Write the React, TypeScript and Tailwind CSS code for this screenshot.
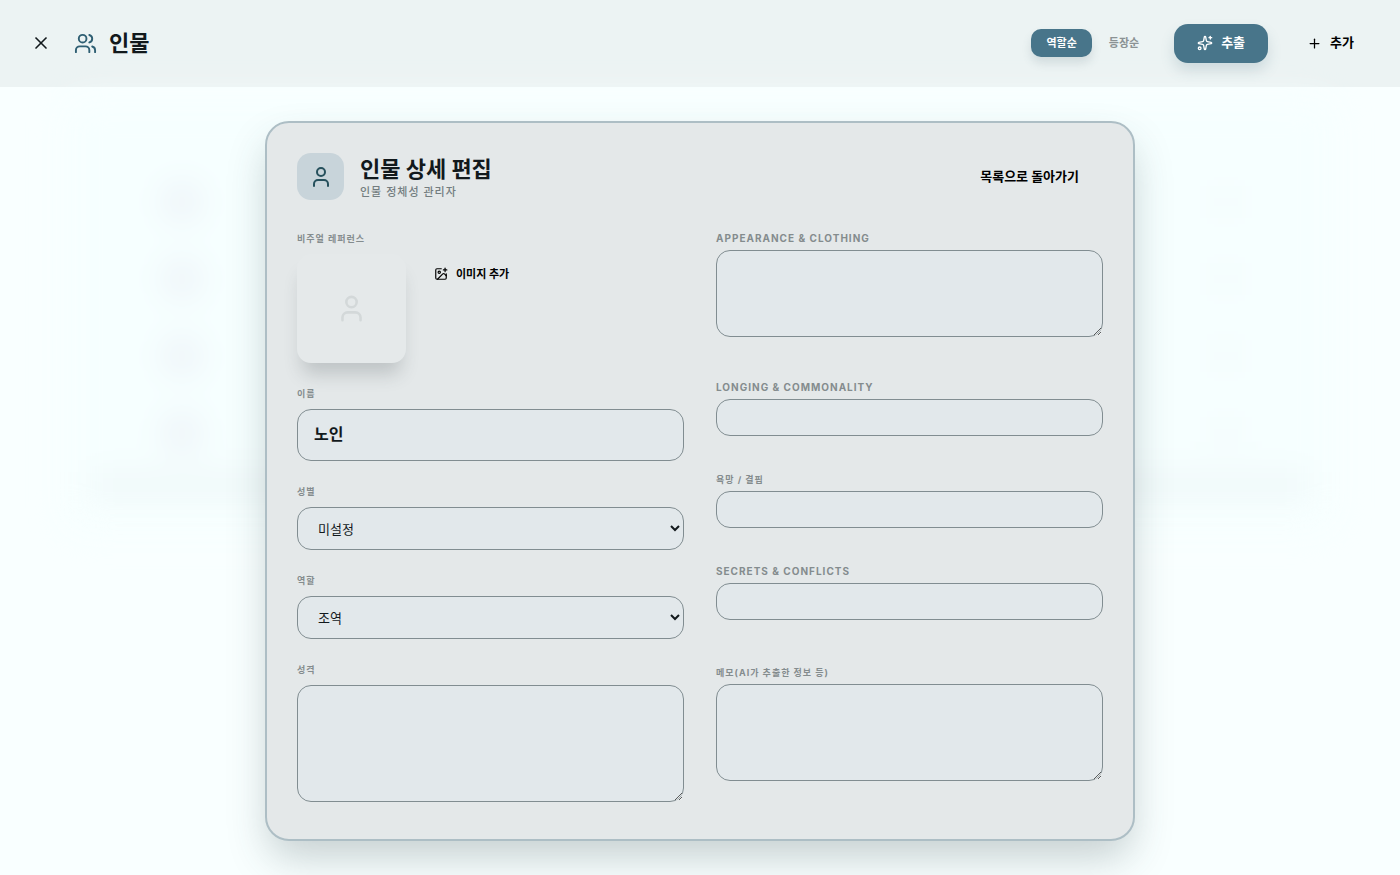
import { useState } from 'react'
import type { ReactNode } from 'react'
import { ImagePlus, Plus, Sparkles, User, Users, X } from 'lucide-react'

interface FieldProps {
    id: string,
    label: string,
    tight?: boolean,
    latin?: boolean,
    children: ReactNode
}

const boxClass = "block w-full rounded-[14px] border border-[#818d91] bg-[#e2e8eb] text-[#12191c] outline-none"

const Field = ({ id, label, tight, latin, children }: FieldProps) => (
    <div>
        <label htmlFor={id} className={`block leading-[15px] font-bold tracking-[1px] text-[#848c8e] ${tight ? 'mb-1' : 'mb-2'} ${latin ? 'text-[10px]' : 'text-[9px]'}`}>{label}</label>
        {children}
    </div>
)

const rows = [1, 2, 3, 4]

// the character list, out of focus behind the dialog
const ListBackdrop = () => (
    <div aria-hidden="true" className="absolute inset-x-0 top-3 px-16 blur-lg">
        <div className="bg-[#f6ffff] rounded-3xl pt-16">
            {rows.map((row) => (
                <div key={row} className="flex justify-between items-center h-[77px] pl-[98px] pr-[98px]">
                    <div className="w-10 h-10 rounded-full bg-[#eef3f8]"></div>
                    <div className="w-6 h-4 bg-[#f2f7fa]"></div>
                </div>
            ))}
            <div className="h-7 mx-7 bg-[#f0f8f9]"></div>
            <div className="h-8"></div>
        </div>
    </div>
)

export const App = () => {
    const [sort, setSort] = useState('role')
    const [name, setName] = useState('노인')

    const tabClass = (active: boolean) =>
        `h-7 px-[15px] rounded-[10px] text-[11px] font-bold ${active ? 'bg-[#48758a] text-white shadow-[0_6px_10px_rgba(72,100,115,0.16)]' : 'text-[#8b9294]'}`

    return (
        <div className="min-h-screen flex flex-col bg-[#f9ffff] overflow-hidden text-[#12191c] font-[Inter,'Noto_Sans_CJK_KR',sans-serif]">
            <header className="h-[87px] shrink-0 flex items-center justify-between pl-[31px] pr-[22px] pb-px bg-[#ecf3f3]">
                <div className="flex items-center">
                    <button type="button" aria-label="닫기" className="mr-[23px]"><X size={20} strokeWidth={2} /></button>
                    <Users size={23} strokeWidth={2} className="text-[#2f5f73]" />
                    <h1 className="ml-3 text-[22px] leading-8 font-bold">인물</h1>
                </div>
                <div className="flex items-center">
                    <div className="flex items-center gap-0.5 mr-5">
                        <button type="button" className={tabClass(sort === 'role')} onClick={() => setSort('role')}>역할순</button>
                        <button type="button" className={tabClass(sort === 'order')} onClick={() => setSort('order')}>등장순</button>
                    </div>
                    <button type="button" className="flex items-center gap-2 h-[39px] px-[23px] mr-[15px] rounded-[14px] bg-[#48758a] text-white text-[13px] font-bold shadow-[0_8px_14px_rgba(72,110,130,0.18)]">
                        <Sparkles size={16} />추출
                    </button>
                    <button type="button" className="flex items-center gap-2 h-[39px] px-6 text-[13px] font-bold text-black">
                        <Plus size={15} />추가
                    </button>
                </div>
            </header>
            <main className="relative grow px-6 pt-[34px] pb-[35px]">
                <ListBackdrop />
                <section className="relative w-full max-w-[870px] mx-auto px-[30px] pt-[30px] pb-[37px] rounded-3xl border-2 border-[#adbec5] bg-[#e4e8e9] shadow-[0_20px_40px_-4px_rgba(50,70,75,0.26)]">
                    <div className="flex items-center justify-between mb-[31px]">
                        <div className="flex items-center gap-4">
                            <div className="w-[47px] h-[47px] rounded-[14px] bg-[#c8d4da] flex items-center justify-center text-[#26505c]">
                                <User size={24} />
                            </div>
                            <div>
                                <h2 className="text-[22px] leading-[30px] font-bold">인물 상세 편집</h2>
                                <p className="text-[11px] leading-4 tracking-[1px] font-medium text-[#737d80]">인물 정체성 관리자</p>
                            </div>
                        </div>
                        <button type="button" className="h-10 px-6 text-[13px] font-bold text-black">목록으로 돌아가기</button>
                    </div>
                    <div className="grid grid-cols-1 md:grid-cols-2 gap-8">
                        <div className="flex flex-col gap-[23px]">
                            <div>
                                <p className="mb-2 text-[9px] leading-[15px] font-bold tracking-[1px] text-[#848c8e]">비주얼 레퍼런스</p>
                                <div className="flex items-start gap-4">
                                    <div className="w-[109px] h-[109px] rounded-[14px] bg-[#e5e9ea] shadow-[0_16px_18px_-5px_rgba(60,70,75,0.22)] flex items-center justify-center text-[#d3d8d9]">
                                        <User size={31} />
                                    </div>
                                    <button type="button" className="flex items-center gap-2 h-10 px-3 text-[11px] font-bold text-black">
                                        <ImagePlus size={14} />이미지 추가
                                    </button>
                                </div>
                            </div>
                            <Field id="name" label="이름">
                                <input id="name" type="text" value={name} onChange={(e) => setName(e.target.value)} className={`${boxClass} h-[52px] px-4 pb-1 text-[16px] font-bold`} />
                            </Field>
                            <Field id="gender" label="성별">
                                <select id="gender" className={`${boxClass} h-[43px] px-4 text-[13px]`}>
                                    <option>미설정</option>
                                    <option>남성</option>
                                    <option>여성</option>
                                </select>
                            </Field>
                            <Field id="role" label="역할">
                                <select id="role" className={`${boxClass} h-[43px] px-4 text-[13px]`}>
                                    <option>조역</option>
                                    <option>주역</option>
                                </select>
                            </Field>
                            <Field id="personality" label="성격">
                                <textarea id="personality" className={`${boxClass} h-[117px] px-4 py-3 text-[13px]`} />
                            </Field>
                        </div>
                        <div className="flex flex-col gap-9">
                            <div className="pb-[7px]">
                                <Field id="appearance" label="APPEARANCE & CLOTHING" tight latin>
                                    <textarea id="appearance" className={`${boxClass} h-[87px] px-4 py-2 text-[13px]`} />
                                </Field>
                            </div>
                            <Field id="longing" label="LONGING & COMMONALITY" tight latin>
                                <input id="longing" type="text" className={`${boxClass} h-[37px] px-4 text-[13px]`} />
                            </Field>
                            <Field id="desire" label="욕망 / 결핍" tight>
                                <input id="desire" type="text" className={`${boxClass} h-[37px] px-4 text-[13px]`} />
                            </Field>
                            <Field id="secrets" label="SECRETS & CONFLICTS" tight latin>
                                <input id="secrets" type="text" className={`${boxClass} h-[37px] px-4 text-[13px]`} />
                            </Field>
                            <div className="pt-[9px]">
                                <Field id="memo" label="메모(AI가 추출한 정보 등)" tight>
                                    <textarea id="memo" className={`${boxClass} h-[97px] px-4 py-2 text-[13px]`} />
                                </Field>
                            </div>
                        </div>
                    </div>
                </section>
            </main>
        </div>
    )
}

export default App;
